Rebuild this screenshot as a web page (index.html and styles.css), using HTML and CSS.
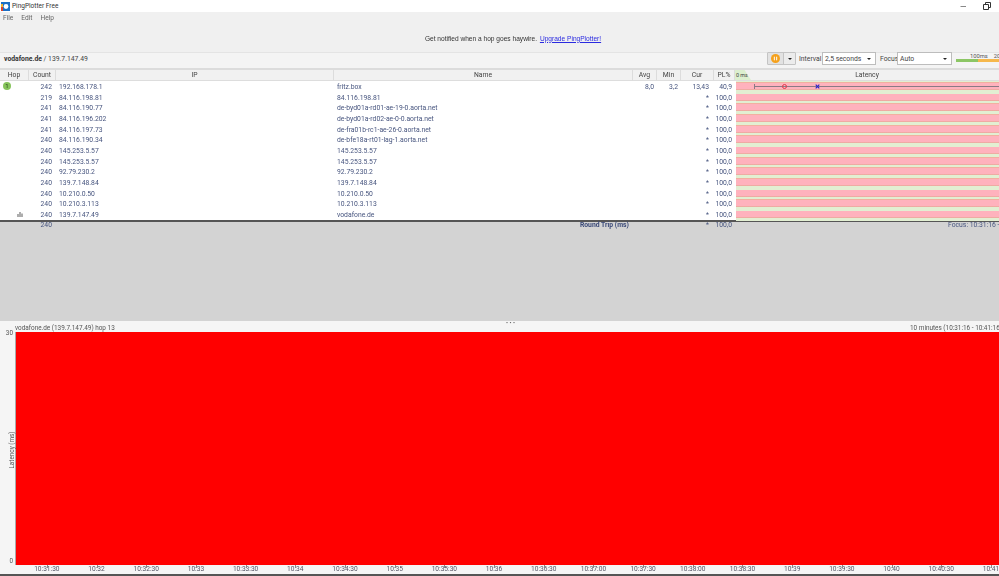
FILE: index.html
```html
<!DOCTYPE html>
<html lang="en">
<head>
<meta charset="utf-8">
<title>PingPlotter Free</title>
<link rel="stylesheet" href="styles.css">
</head>
<body>
<div class="app">
  <header class="titlebar">
    <svg class="logo" viewBox="0 0 9 9" width="9" height="9"><rect width="9" height="9" fill="#1c6fc4"/><rect x="0" y="5" width="2" height="4" fill="#d9402b"/><rect x="0" y="2" width="2" height="3" fill="#f0b030"/><circle cx="5" cy="4.5" r="2.4" fill="#fff"/></svg>
    <span class="apptitle">PingPlotter Free</span>
    <span class="winbtns">
      <svg viewBox="0 0 8 8" width="8" height="8"><path d="M1.500 4.500H7" stroke="#888" fill="none"/></svg>
      <svg viewBox="0 0 8 8" width="8" height="8"><path d="M0.500 2.500h5v5h-5zM2.500 2.500v-2h5v5h-2" stroke="#333" fill="none"/></svg>
    </span>
  </header>
  <nav class="menu"><span>File</span><span>Edit</span><span>Help</span></nav>
  <div class="notice">Get notified when a hop goes haywire.&nbsp; <a href="#">Upgrade PingPlotter!</a></div>
  <div class="toolbar">
    <div class="target"><b>vodafone.de</b> / 139.7.147.49</div>
    <div class="btngroup">
      <span class="btn pausebtn"><svg viewBox="0 0 10 10" width="9" height="9"><circle cx="5" cy="5" r="5" fill="#f5a11c"/><path d="M3.700 3v4M6.300 3v4" stroke="#fff" stroke-width="1.100"/></svg></span>
      <span class="btn caretbtn"><i class="caret"></i></span>
    </div>
    <label class="flabel lab-int">Interval</label>
    <div class="select sel-int"><span>2,5 seconds</span><i class="caret"></i></div>
    <label class="flabel lab-foc">Focus</label>
    <div class="select sel-foc"><span>Auto</span><i class="caret"></i></div>
    <div class="scale">
      <div class="scale-labels"><span>100ms</span><span>200ms</span></div>
      <div class="scale-bar"><i class="sgreen"></i><i class="sorange"></i></div>
    </div>
  </div>
  <div class="grid head">
    <div>Hop</div><div>Count</div><div>IP</div><div>Name</div><div>Avg</div><div>Min</div><div>Cur</div><div>PL%</div>
    <div class="lat-head"><span class="zero">0 ms</span><span class="lat-title">Latency</span></div>
  </div>
  <div class="rows">
    <div class="grid row"><div class="c-hop"><span class="badge">1</span></div><div class="r">242</div><div class="l">192.168.178.1</div><div class="l">fritz.box</div><div class="r">8,0</div><div class="r">3,2</div><div class="r">13,43</div><div class="r">40,9</div><div class="bar"><i class="whisker"></i><i class="mean"></i><svg class="cross" viewBox="0 0 5 5" width="5" height="5"><path d="M0.700 0.700l3.600 3.600M4.300 0.700l-3.600 3.600" stroke="#2222cc" stroke-width="1.100"/></svg></div></div>
    <div class="grid row"><div></div><div class="r">219</div><div class="l">84.116.198.81</div><div class="l">84.116.198.81</div><div></div><div></div><div class="r">*</div><div class="r">100,0</div><div class="bar"></div></div>
    <div class="grid row"><div></div><div class="r">241</div><div class="l">84.116.190.77</div><div class="l">de-byd01a-rd01-ae-19-0.aorta.net</div><div></div><div></div><div class="r">*</div><div class="r">100,0</div><div class="bar"></div></div>
    <div class="grid row"><div></div><div class="r">241</div><div class="l">84.116.196.202</div><div class="l">de-byd01a-rd02-ae-0-0.aorta.net</div><div></div><div></div><div class="r">*</div><div class="r">100,0</div><div class="bar"></div></div>
    <div class="grid row"><div></div><div class="r">241</div><div class="l">84.116.197.73</div><div class="l">de-fra01b-rc1-ae-26-0.aorta.net</div><div></div><div></div><div class="r">*</div><div class="r">100,0</div><div class="bar"></div></div>
    <div class="grid row"><div></div><div class="r">240</div><div class="l">84.116.190.34</div><div class="l">de-bfe18a-rt01-lag-1.aorta.net</div><div></div><div></div><div class="r">*</div><div class="r">100,0</div><div class="bar"></div></div>
    <div class="grid row"><div></div><div class="r">240</div><div class="l">145.253.5.57</div><div class="l">145.253.5.57</div><div></div><div></div><div class="r">*</div><div class="r">100,0</div><div class="bar"></div></div>
    <div class="grid row"><div></div><div class="r">240</div><div class="l">145.253.5.57</div><div class="l">145.253.5.57</div><div></div><div></div><div class="r">*</div><div class="r">100,0</div><div class="bar"></div></div>
    <div class="grid row"><div></div><div class="r">240</div><div class="l">92.79.230.2</div><div class="l">92.79.230.2</div><div></div><div></div><div class="r">*</div><div class="r">100,0</div><div class="bar"></div></div>
    <div class="grid row"><div></div><div class="r">240</div><div class="l">139.7.148.84</div><div class="l">139.7.148.84</div><div></div><div></div><div class="r">*</div><div class="r">100,0</div><div class="bar"></div></div>
    <div class="grid row"><div></div><div class="r">240</div><div class="l">10.210.0.50</div><div class="l">10.210.0.50</div><div></div><div></div><div class="r">*</div><div class="r">100,0</div><div class="bar"></div></div>
    <div class="grid row"><div></div><div class="r">240</div><div class="l">10.210.3.113</div><div class="l">10.210.3.113</div><div></div><div></div><div class="r">*</div><div class="r">100,0</div><div class="bar"></div></div>
    <div class="grid row"><div class="c-hop"><svg class="chart" viewBox="0 0 7 6" width="7" height="6"><path d="M1 6V3M3 6V1M5 6V2.500" stroke="#777" stroke-width="1.200" fill="none"/></svg></div><div class="r">240</div><div class="l">139.7.147.49</div><div class="l">vodafone.de</div><div></div><div></div><div class="r">*</div><div class="r">100,0</div><div class="bar"></div></div>
  </div>
  <div class="summary">
    <div class="grid sumrow"><div></div><div class="r">240</div><div></div><div class="r rt"><b>Round Trip (ms)</b></div><div></div><div></div><div class="r">*</div><div class="r">100,0</div><div class="focus">Focus: 10:31:16 - 10:41:16</div></div>
  </div>
  <section class="graph">
    <div class="splitter"><span class="dots">•••</span><span class="ghead-l">vodafone.de (139.7.147.49) hop 13</span><span class="ghead-r">10 minutes (10:31:16 - 10:41:16)</span></div>
    <div class="plot">
      <div class="yaxis"><span class="ytop">30</span><span class="ytitle">Latency (ms)</span><span class="ybot">0</span></div>
      <div class="red"></div>
    </div>
    <div class="xaxis">
      <span>10:31:30</span><span>10:32</span><span>10:32:30</span><span>10:33</span><span>10:33:30</span><span>10:34</span><span>10:34:30</span><span>10:35</span><span>10:35:30</span><span>10:36</span><span>10:36:30</span><span>10:37:00</span><span>10:37:30</span><span>10:38:00</span><span>10:38:30</span><span>10:39</span><span>10:39:30</span><span>10:40</span><span>10:40:30</span><span>10:41</span>
    </div>
  </section>
</div>
</body>
</html>
```
FILE: styles.css
```css
* { box-sizing: border-box; }
html, body { margin: 0; padding: 0; }
body { width: 999px; height: 576px; overflow: hidden; background: #f0f0f0; font-family: Roboto, "Open Sans", sans-serif; font-size: 6.800px; color: #444; }
.app { display: flex; flex-direction: column; height: 576px; overflow: hidden; filter: blur(0.3px); }

.titlebar { height: 12px; background: #fff; display: flex; align-items: center; padding-left: 1px; color: #333; font-size: 6.500px; }
.logo { margin-right: 2px; }
.winbtns { margin-left: auto; display: flex; gap: 16px; padding-right: 8px; }

.menu { height: 12px; background: #f0f0f0; display: flex; gap: 8px; align-items: center; padding-left: 3px; color: #666; font-size: 6.600px; }
.notice { height: 28px; background: #f0f0f0; display: flex; align-items: center; justify-content: center; padding-left: 27px; font-family: "Liberation Sans", sans-serif; font-size: 6.600px; color: #333; }
.notice a { color: #2a2ae0; margin-left: 1px; }

.toolbar { height: 18px; background: #f4f4f4; border-top: 1px solid #e4e4e4; border-bottom: 2px solid #dcdcdc; padding-bottom: 4px; display: flex; align-items: center; position: relative; }
.target { flex: none; width: 767px; padding-left: 4px; color: #444; font-size: 6.800px; }
.target b { color: #333; }
.btngroup { flex: none; display: flex; width: 29px; height: 13px; border: 1px solid #c4c4c4; border-radius: 1px; background: #e2e2e2; }
.btn { display: flex; align-items: center; justify-content: center; }
.pausebtn { width: 16px; border-right: 1px solid #c4c4c4; }
.caretbtn { flex: 1; background: #ececec; }
.caret { display: block; width: 0; height: 0; border-left: 2.500px solid transparent; border-right: 2.500px solid transparent; border-top: 2.500px solid #222; }
.flabel { flex: none; font-size: 6.800px; color: #444; }
.lab-int { margin-left: 3px; width: 23px; }
.lab-foc { margin-left: 4px; width: 17px; }
.select { flex: none; height: 13px; background: #fff; border: 1px solid #bdbdbd; display: flex; align-items: center; justify-content: space-between; padding: 0 4px 0 2px; color: #444; font-size: 6.800px; }
.sel-int { width: 54px; }
.sel-foc { width: 55px; }
.scale { flex: none; align-self: flex-start; margin-left: 4px; width: 50px; height: 9px; display: flex; flex-direction: column; }
.scale-labels { display: flex; gap: 6px; padding-left: 14px; height: 5px; line-height: 7px; font-size: 5.800px; color: #555; white-space: nowrap; }
.scale-bar { display: flex; height: 3px; margin-top: 1px; }
.sgreen { display: block; width: 22px; background: #8cc665; }
.sorange { display: block; flex: 1; background: #f6b84c; }

.grid { display: grid; grid-template-columns: 29px 27px 278px 299px 24px 24px 33px 21px 264px; }
.head { height: 11px; background: #f1f1f1; border-bottom: 1px solid #ddd; line-height: 10.500px; text-align: center; color: #444; }
.head > div { border-right: 1px solid #dcdcdc; }
.head > div:last-child { border-right: 0; }
.lat-head { position: relative; }
.zero { position: absolute; left: 0; top: 0; width: 16px; height: 10px; background: #dcefce; clip-path: polygon(0 0, 60% 0, 100% 100%, 0 100%); text-align: left; padding-left: 1px; font-size: 5.400px; }
.lat-title { font-size: 6.800px; }

.rows { background: #fff; }
.row { height: 10.667px; line-height: 12px; color: #47557f; }
.r { text-align: right; white-space: nowrap; }
.l { padding-left: 3px; white-space: nowrap; overflow: hidden; }
.grid > .r:nth-child(2) { padding-right: 4px; }
.grid > .r:nth-child(5), .grid > .r:nth-child(6) { padding-right: 3px; }
.grid > .r:nth-child(7) { padding-right: 5px; }
.grid > .r:nth-child(8) { padding-right: 3px; }
.c-hop { display: flex; align-items: center; justify-content: center; position: relative; }
.badge { position: absolute; left: 3px; top: 1px; width: 8px; height: 8px; border-radius: 50%; background: #86c45c; color: #27421b; font-size: 6px; line-height: 8px; text-align: center; }
.chart { position: absolute; left: 17px; top: 2px; }
.bar { position: relative; margin-left: 1px; overflow: hidden; background: linear-gradient(#e2efd2 0, #e2efd2 1.500px, #f2b0a0 1.500px, #ffb2bd 2.200px, #ffb2bd 8px, #e8a898 8.700px, #e2efd2 8.700px); }
.whisker { position: absolute; left: 18px; right: 0; top: 5px; height: 1px; background: #8a7a85; }
.whisker::before { content: ""; position: absolute; left: 0; top: -2px; width: 1px; height: 5px; background: #8a7a85; }
.mean { position: absolute; left: 46px; top: 3px; width: 5px; height: 5px; border: 1px solid #e23a4c; border-radius: 50%; }
.cross { position: absolute; left: 79px; top: 3px; }

.summary { flex: none; height: 101.330px; background: #d3d3d3; border-top: 2px solid #555; }
.sumrow { height: 9px; line-height: 7px; color: #47557f; }
.rt { padding-right: 4px; color: #3b4a78; }
.focus { white-space: nowrap; padding-left: 213px; }

.graph { flex: 1; min-height: 0; background: #f5f5f5; display: flex; flex-direction: column; border-bottom: 2px solid #555; }
.splitter { flex: none; height: 11px; position: relative; display: flex; justify-content: space-between; align-items: flex-end; padding-left: 15px; line-height: 8px; white-space: nowrap; font-size: 6.400px; color: #555; }
.dots { position: absolute; left: 506px; top: -1px; font-size: 6px; letter-spacing: 1.500px; line-height: 6px; color: #555; }
.ghead-r { margin-right: -3px; }
.plot { flex: 1; min-height: 0; display: flex; }
.yaxis { flex: none; width: 16px; position: relative; border-right: 1px solid #aaa; font-size: 6.400px; color: #555; }
.ytop { position: absolute; right: 2px; top: -3px; }
.ybot { position: absolute; right: 2px; bottom: 0; }
.ytitle { position: absolute; left: -8px; top: 113px; width: 40px; text-align: center; transform: rotate(-90deg); white-space: nowrap; line-height: 10px; }
.red { flex: 1; background: #f00; }
.xaxis { flex: none; height: 9px; display: grid; grid-template-columns: repeat(20, 49.700px); padding-left: 22px; line-height: 9px; text-align: center; font-size: 6.600px; color: #556; white-space: nowrap; }
.xaxis span { position: relative; }
.xaxis span::before { content: ""; position: absolute; left: 50%; top: 0; width: 1px; height: 3px; background: #888; }
```
